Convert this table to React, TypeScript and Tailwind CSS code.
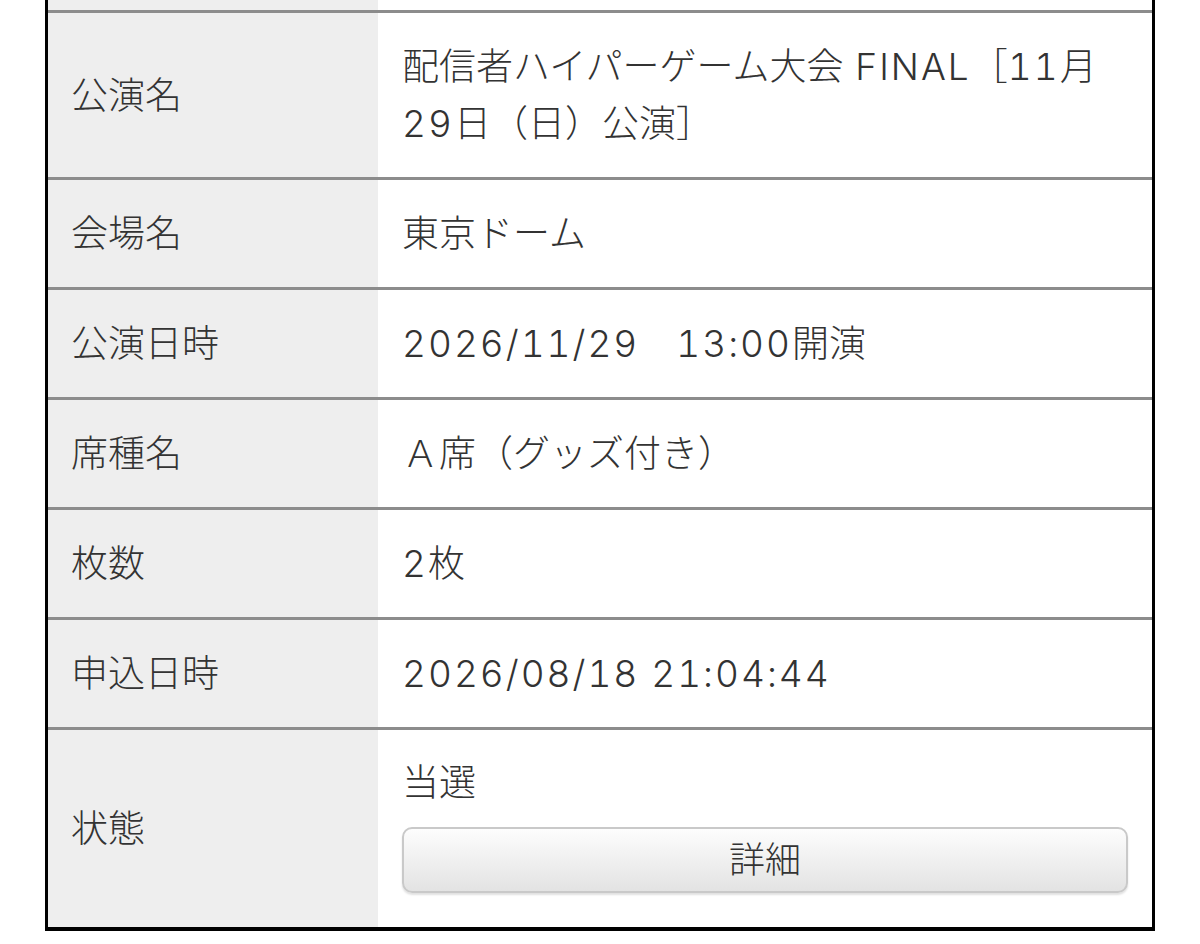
const rows = [
  { label: "公演名", value: "配信者ハイパーゲーム大会 FINAL［11月29日（日）公演］" },
  { label: "会場名", value: "東京ドーム" },
  { label: "公演日時", value: "2026/11/29　13:00開演" },
  { label: "席種名", value: "Ａ席（グッズ付き）" },
  { label: "枚数", value: "2枚" },
  { label: "申込日時", value: "2026/08/18 21:04:44" },
]

// latin runs get a little extra spacing so the digits sit as wide as in the original
function Text({ children }: { children: string }) {
  return (
    <>
      {children.split(/([\x20-\x7e]+)/).map((part, i) =>
        /^[\x20-\x7e]+$/.test(part) ? (
          <span key={i} className="tracking-[2px]">
            {part}
          </span>
        ) : (
          part
        )
      )}
    </>
  )
}

export default function App() {
  return (
    <div
      className="w-[1200px] h-[944px] bg-white text-[#333] text-[37px] leading-[57px] font-light tabular-nums overflow-hidden"
      style={{ fontFamily: 'Inter, "Noto Sans CJK JP", sans-serif' }}
    >
      <div className="ml-[45px] w-[1110px] border-x-[3px] border-b-[4px] border-black">
        {/* tail of the previous row */}
        <div className="flex h-[10px]">
          <div className="w-[330px] bg-[#eeeeee]" />
          <div className="flex-1" />
        </div>

        {rows.map((row) => (
          <div key={row.label} className="flex border-t-[3px] border-[#8c8c8c]">
            <div className="w-[330px] shrink-0 bg-[#eeeeee] pl-[23px] flex items-center">
              {row.label}
            </div>
            <div className="flex-1 px-[24px] py-[25px]">
              <Text>{row.value}</Text>
            </div>
          </div>
        ))}

        <div className="flex border-t-[3px] border-[#8c8c8c] h-[200px]">
          <div className="w-[330px] shrink-0 bg-[#eeeeee] pl-[23px] flex items-center">
            状態
          </div>
          <div className="flex-1 px-[24px] pt-[24px]">
            <div>当選</div>
            <button className="mt-[16px] w-full h-[66px] rounded-[10px] border-2 border-[#c9c9c9] bg-gradient-to-b from-[#fdfdfd] to-[#e3e3e3] shadow-[0_2px_2px_rgba(0,0,0,0.12)] text-[36px] text-[#333] flex items-center justify-center">
              詳細
            </button>
          </div>
        </div>
      </div>
    </div>
  )
}
